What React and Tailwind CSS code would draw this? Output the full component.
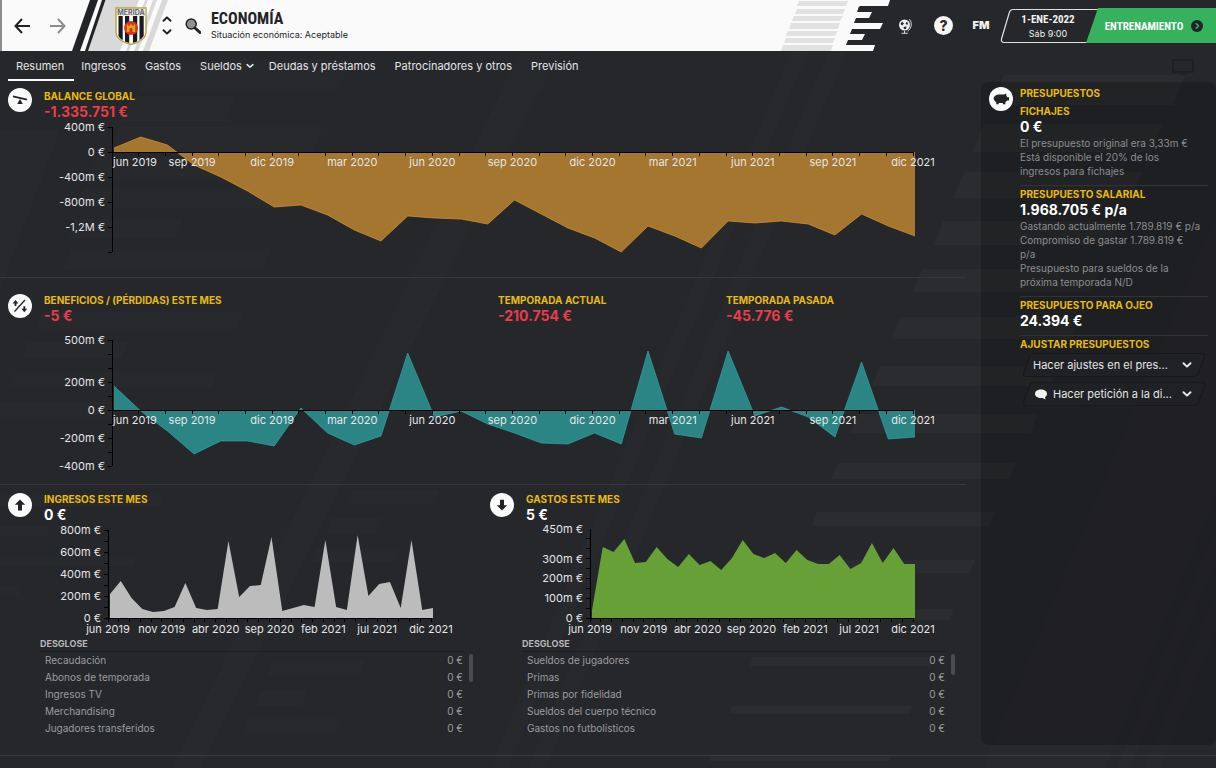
import React from "react";

const FONT = "font-['Inter','Liberation_Sans',sans-serif]";
const NARROW = "font-['Liberation_Sans_Narrow','Roboto_Condensed','Roboto',sans-serif]";
const TITLE = "text-[10px] font-bold leading-4 text-[#e8bb0c]";
const VALUE = "text-[14px] font-bold leading-4";

/* ---------- backdrop ---------- */

const LEFT_BARS = [
  [60, 31, 150, 350], [96, 25, 132, 236], [127, 27, 120, 323], [158, 22, 95, 305], [188, 20, 83, 305],
  [219, 19, 75, 183], [249, 20, 71, 271], [312, 17, 42, 243], [342, 16, 28, 128], [372, 15, 15, 218],
  [402, 15, -10, 120], [495, 11, -10, 165], [526, 10, -10, 50], [556, 10, -10, 137], [586, 10, -10, 22],
  [490, 14, 352, 440], [518, 16, 332, 382], [548, 14, 318, 400], [660, 16, 274, 366], [690, 16, 262, 308], [719, 16, 248, 342],
];
const RIGHT_BARS = [
  [75, 30, 1004, 1185], [124, 28, 984, 1163], [172, 26, 964, 1142], [221, 24, 943, 1121], [269, 23, 922, 1100],
  [317, 22, 900, 1079], [366, 20, 880, 1058], [414, 19, 858, 1038], [463, 16, 838, 1016], [512, 14, 817, 995],
  [560, 13, 797, 975], [609, 11, 775, 954], [657, 9, 753, 933], [706, 8, 732, 913], [755, 6, 711, 891],
];

const Bar = ([y, h, l, r]) => (
  <polygon key={`${y}-${l}`} points={`${l},${y} ${r},${y} ${r - h * 0.4},${y + h} ${l - h * 0.4},${y + h}`} />
);

function Backdrop() {
  return (
    <svg aria-hidden="true" className="absolute inset-0 h-full w-full" viewBox="0 0 1216 768" preserveAspectRatio="none">
      <g fill="#ffffff" fillOpacity="0.013">{LEFT_BARS.map(Bar)}</g>
      <g fill="#ffffff" fillOpacity="0.022">{RIGHT_BARS.map(Bar)}</g>
      <g fill="#ffffff" fillOpacity="0.01">
        <polygon points="791,52 808,52 508,768 490,768" />
        <polygon points="828,52 847,52 546,768 528,768" />
        <polygon points="520,52 560,52 200,768 172,768" />
        <polygon points="1216,215 1216,495 1105,768 983,768" />
        <polygon points="1216,527 1216,560 1130,768 1117,768" />
        <polygon points="1216,592 1216,630 1160,768 1144,768" />
        <polygon points="0,130 60,130 0,290" />
      </g>
    </svg>
  );
}

/* ---------- icons ---------- */

function Disc({ children }) {
  return (
    <svg aria-hidden="true" className="h-6 w-6 shrink-0" viewBox="0 0 24 24">
      <circle cx="12" cy="12" r="12" fill="#fafafa" />
      {children}
    </svg>
  );
}

const BalanceIcon = () => (
  <Disc>
    <path d="M5 8.3 19 11.6" stroke="#222326" strokeWidth="1.7" />
    <path d="M12 11 14.8 16H9.2Z" fill="#222326" />
  </Disc>
);
const ProfitIcon = () => (
  <Disc>
    <path d="M6.5 17.5 17 6" stroke="#222326" strokeWidth="1.3" />
    <path d="M7.5 6 10.4 9.4H8.4V12H6.6V9.4H4.6ZM16.3 18.2 13.4 14.8H15.4V12.2H17.2V14.8H19.2Z" fill="#222326" />
  </Disc>
);
const UpIcon = () => (
  <Disc><path d="M12 6.5 17.2 11.8H14V17.4H10V11.8H6.8Z" fill="#222326" /></Disc>
);
const DownIcon = () => (
  <Disc><path d="M12 17.5 17.2 12.2H14V6.8H10V12.2H6.8Z" fill="#222326" /></Disc>
);
const PigIcon = () => (
  <Disc>
    <path d="M4.6 11.4C5 8.6 7.6 7.4 11 7.4H15L17.2 6.6 17.4 8.8 18.4 10.2H20V13.4H18.3L16.4 15V17.3H13.9V16H9.7V17.3H7.2V15C5.8 14.2 4.9 13 4.6 11.4Z" fill="#222326" />
  </Disc>
);

const Chevron = ({ className }) => (
  <svg aria-hidden="true" className={className} viewBox="0 0 10 10" fill="none" stroke="currentColor" strokeWidth="2" strokeLinecap="round" strokeLinejoin="round">
    <path d="M1.5 3.2 5 6.6 8.5 3.2" />
  </svg>
);

function Crest() {
  return (
    <svg role="img" aria-label="Mérida" className="h-[38px] w-8" viewBox="0 0 32 38">
      <clipPath id="shield"><path d="M2 2H30V26Q29 33 16 36.5 3 33 2 26Z" /></clipPath>
      <path d="M1 1H31V26Q30 34 16 37.5 2 34 1 26Z" fill="#fafafa" stroke="#b9a545" strokeWidth="1.4" />
      <g clipPath="url(#shield)">
        {[3.5, 10, 18, 24.5].map((x) => <rect key={x} x={x} y="9" width="4.2" height="28" fill="#1b1c1f" />)}
        <rect x="2" y="2" width="28" height="7" fill="#e9e9ea" />
      </g>
      <text x="16" y="8" textAnchor="middle" fontSize="7" fontWeight="bold" fill="#66676b">MERIDA</text>
      <circle cx="16" cy="21" r="7" fill="#d9341f" />
      <path d="M11.8 25V17.5H13.2V19H14.6V17.5H17.4V19H18.8V17.5H20.2V25H17.6V22.4A1.6 1.6 0 0 0 14.4 22.4V25Z" fill="#e0a41f" />
    </svg>
  );
}

/* ---------- charts ---------- */

function AreaChart({ label, height, base, series, top, bottom, step, yLabels, xLabels, xEvery, xOffset, clampFirst, fill, line }) {
  const last = series.length - 1;
  const outline = series.map((v, i) => `${i},${base - v}`).join(" ");
  const area = `0,${base} ${outline} ${last},${base}`;
  const yTicks = [];
  for (let v = -bottom; v <= top; v += step) yTicks.push(v);
  return (
    <svg role="img" aria-label={label} className="block w-full overflow-visible text-[11px]" height={height}>
      <svg x="2" width="100%" height={height} viewBox={`0 0 ${last} ${height}`} preserveAspectRatio="none">
        <polygon points={area} fill={fill} />
        {line && <polyline points={outline} fill="none" stroke={line} strokeOpacity="0.7" strokeWidth="1" vectorEffect="non-scaling-stroke" />}
      </svg>
      <g stroke="#000" strokeWidth="1" shapeRendering="crispEdges">
        <line x1="0" x2="100%" y1={base} y2={base} />
        <line x1="0" x2="0" y1={base - top} y2={base + bottom} />
        {yTicks.map((v) => <line key={v} x1="-4" x2="0" y1={base - v} y2={base - v} />)}
        {series.map((_, i) => <line key={i} x1={`${(i / last) * 100}%`} x2={`${(i / last) * 100}%`} y1={base} y2={base + 4} />)}
      </g>
      <g fill="#e4e5e6">
        {yLabels.map(([v, t]) => <text key={t} x="-7" y={base - v + 4} textAnchor="end">{t}</text>)}
        {xLabels.map((t, i) => {
          const first = clampFirst && i === 0;
          return (
            <text key={t} x={first ? "1" : `${Math.min(100, ((i * xEvery) / last) * 100)}%`} y={base + xOffset} textAnchor={first ? "start" : "middle"}>{t}</text>
          );
        })}
      </g>
    </svg>
  );
}

const BALANCE = [4, 15, 7, -13, -25, -39, -55, -53, -63, -78, -89, -64, -66, -67, -72, -48, -62, -76, -86, -100, -74, -84, -96, -69, -71, -69, -72, -83, -62, -74, -84];
const PROFIT = [24, -1, -21, -44, -31, -31, -36, 2, -23, -35, -26, 57, -7, -1, -14, -23, -33, -34, -23, -34, 59, -24, -28, 59, -6, 3, -7, -27, 48, -29, -27];
const INCOME = [24, 37, 20, 9, 6, 7, 11, 35, 10, 8, 9, 77, 21, 32, 33, 81, 7, 10, 13, 11, 78, 11, 8, 83, 22, 34, 36, 10, 78, 8, 10];
const SPENDING = [8, 71, 66, 79, 55, 56, 71, 59, 51, 64, 53, 57, 48, 60, 78, 64, 60, 65, 55, 68, 58, 54, 54, 63, 49, 55, 75, 55, 70, 54, 54];

const QUARTERS = ["jun 2019", "sep 2019", "dic 2019", "mar 2020", "jun 2020", "sep 2020", "dic 2020", "mar 2021", "jun 2021", "sep 2021", "dic 2021"];
const MONTHS = ["jun 2019", "nov 2019", "abr 2020", "sep 2020", "feb 2021", "jul 2021", "dic 2021"];

/* ---------- building blocks ---------- */

function Stat({ title, value, tone, className = "" }) {
  return (
    <div className={className}>
      <h2 className={TITLE}>{title}</h2>
      <p className={`${VALUE} ${tone}`}>{value}</p>
    </div>
  );
}

const RED = "text-[#e93d49]";

function Breakdown({ rows, thumb }) {
  return (
    <div className="flex gap-[5px] pl-10 pr-[9px]">
      <table className="flex-1 text-[10px] text-[#9b9c9e]">
        <thead>
          <tr className="border-b border-[#1d1e21]">
            <th colSpan="2" className="p-0 text-left text-[9px] font-bold leading-[15px] text-[#b5b6b8]">DESGLOSE</th>
          </tr>
        </thead>
        <tbody>
          {rows.map((r) => (
            <tr key={r}>
              <td className="p-0 pl-[5px] leading-[17px]">{r}</td>
              <td className="p-0 pr-px text-right leading-[17px]">0 €</td>
            </tr>
          ))}
        </tbody>
      </table>
      <div className={`mt-[18px] w-1 rounded-sm bg-[#4b4c50] ${thumb}`} />
    </div>
  );
}

function MonthPanel({ icon, title, value, thumb, rows, chart }) {
  return (
    <section>
      <div className="flex items-center gap-3 pl-2 pt-[6px]">
        <div className="pb-1">{icon}</div>
        <Stat title={title} value={value} tone="text-white" />
      </div>
      <div className="ml-[108px] mr-[51px]">{chart}</div>
      <Breakdown rows={rows} thumb={thumb} />
    </section>
  );
}

function Budget({ title, value, notes = [] }) {
  return (
    <div className="border-b border-[#323337] pb-[7px]">
      <h3 className={TITLE}>{title}</h3>
      <p className="text-[14px] font-bold leading-[15px] text-white">{value}</p>
      {notes.length > 0 && (
        <div className="whitespace-pre-line pt-[2px] text-[10px] leading-[14px] text-[#8c8d90]">
          {notes.map((n) => <p key={n}>{n}</p>)}
        </div>
      )}
    </div>
  );
}

function ActionSelect({ label, text, icon }) {
  return (
    <div className="relative flex h-6 items-center gap-[6px] pl-[13px] pr-4 text-[#e4e5e6]">
      <div className="absolute inset-y-0 left-[6px] right-[6px] -skew-x-[20deg] rounded-[4px] border border-[#17181a] bg-[#202124]" />
      {icon}
      <select aria-label={label} className="relative min-w-0 flex-1 appearance-none bg-transparent text-[11px] leading-4 outline-none">
        <option>{text}</option>
      </select>
      <Chevron className="relative h-[10px] w-[10px]" />
    </div>
  );
}

/* ---------- header ---------- */

function Header() {
  return (
    <header className="relative flex h-[51px]">
      <div className="relative flex min-w-0 flex-1 items-center border-l-2 border-[#8b8c8f] bg-[#fafafa] text-[#222326]">
        <svg aria-hidden="true" className="absolute left-0 top-0 h-[51px] w-[180px]" viewBox="2 0 180 51">
          <polygon points="106,0 172,0 152,51 87,51" fill="#d9d9da" />
          <polygon points="90,0 98,0 80,51 72,51" fill="#222326" />
          <polygon points="102,0 105.500,0 88,51 85,51" fill="#222326" />
          <g fill="#fafafa">
            <polygon points="139,0 145,0 126,51 120,51" />
            <polygon points="148,0 153,0 134,51 129,51" />
            <polygon points="157,0 162,0 143,51 138,51" />
            <polygon points="168,0 174,0 156,51 149,51" />
          </g>
        </svg>
        <button aria-label="Atrás" className="relative ml-3">
          <svg className="h-4 w-4" viewBox="0 0 16 16" fill="none" stroke="#222326" strokeWidth="2"><path d="M8 1 1.500 8 8 15M1.500 8H16" /></svg>
        </button>
        <button aria-label="Adelante" className="relative ml-5">
          <svg className="h-4 w-4" viewBox="0 0 16 16" fill="none" stroke="#8c8d90" strokeWidth="2"><path d="M8 1 14.500 8 8 15M14.500 8H0" /></svg>
        </button>
        <div className="relative ml-[49px]"><Crest /></div>
        <div className="relative ml-[15px] flex flex-col gap-[3px]">
          <button aria-label="Anterior"><Chevron className="h-[10px] w-[10px] rotate-180" /></button>
          <button aria-label="Siguiente"><Chevron className="h-[10px] w-[10px]" /></button>
        </div>
        <button aria-label="Buscar" className="relative ml-[13px]">
          <svg className="h-4 w-4" viewBox="0 0 16 16"><circle cx="6.200" cy="6" r="5" fill="#8f9092" stroke="#222326" strokeWidth="1.500" /><path d="M10 10 15 14.500" stroke="#222326" strokeWidth="3" strokeLinecap="round" /></svg>
        </button>
        <div className="relative ml-[10px] pb-[2px]">
          <h1 className={`text-[16px] font-bold leading-5 ${NARROW}`}>ECONOMÍA</h1>
          <p className="text-[9px] leading-3">Situación económica: Aceptable</p>
        </div>
      </div>
      <svg aria-hidden="true" className="h-[51px] w-[120px] shrink-0" viewBox="770 0 120 51">
        <polygon points="770,0 862,0 846,51 770,51" fill="#fafafa" />
        <g fill="#e1e1e1">
          <polygon points="799,1 848,1 846,6 797,6" /><polygon points="797,9 845,9 843,14 795,14" />
          <polygon points="794,16 843,16 840,21 792,21" /><polygon points="791,23 840,23 838,29 789,29" />
          <polygon points="788,31 838,31 835,36 786,36" /><polygon points="786,38 835,38 833,43 784,43" />
          <polygon points="783,45 833,45 831,51 781,51" />
        </g>
        <g fill="#fafafa">
          <polygon points="855,0 890,0 888,6 855,6" /><polygon points="855,12 872,12 869,18 852,18" />
          <polygon points="850,23 883,23 880,29 848,29" /><polygon points="848,34 865,34 862,40 845,40" />
          <polygon points="845,45 875,45 873,51 840,51" />
        </g>
        <g fill="#26272b">
          <polygon points="859,6.500 880,6.500 878,12 857,12" /><polygon points="856,18 875,18 873,23 854,23" />
          <polygon points="852,29 871,29 869,34 850,34" /><polygon points="848,40 868,40 866,45 846,45" />
        </g>
      </svg>
      <div className="flex shrink-0 items-center">
        <button aria-label="Mundo" className="ml-[7px]">
          <svg className="h-4 w-4" viewBox="0 0 16 16">
            <circle cx="7.500" cy="7" r="5.500" fill="#eceded" />
            <path d="M5 3.500 7 5.500 5 7.500 3.500 6ZM9 4 11 4.800 10.500 7 8.800 6ZM6.500 9 9.500 8.500 9 11H7Z" fill="#26272b" />
            <path d="M12.500 1.200A8 8 0 0 1 10.500 13.200M7.500 13V15.200M4.500 15.300H10.800" stroke="#d8d9da" fill="none" />
          </svg>
        </button>
        <button aria-label="Ayuda" className="ml-[21px] flex h-[19px] w-[19px] items-center justify-center rounded-full bg-[#f6f7f2] text-[14px] font-extrabold leading-none text-[#26272b]">?</button>
        <button aria-label="Football Manager" className="ml-[19px] w-[18px] text-[11px] font-black leading-none text-[#f1f2ee]">FM</button>
        <div className="relative ml-[10px] flex h-9 items-stretch">
          <svg aria-hidden="true" className="absolute left-0 top-0 h-9 w-[216px]" viewBox="0 0 216 36">
            <path d="M98 1.500H13Q10.500 1.500 9.500 4L1.500 31Q1 34.500 4 34.500H90" fill="none" stroke="#dfe0da" strokeWidth="1.200" />
            <polygon points="98,0 216,0 216,35 86,35" fill="#36b25f" />
          </svg>
          <div className="relative flex w-[96px] flex-col items-center pt-1 text-[#f1f2ee]">
            <span className={`text-[11px] font-bold leading-4 ${NARROW}`}>1-ENE-2022</span>
            <span className="text-[9px] leading-[11px]">Sáb 9:00</span>
          </div>
          <button className={`relative flex w-[120px] items-center justify-center gap-2 pr-1 text-[11px] font-bold text-white ${NARROW}`}>
            <span className="pt-[3px] leading-4">ENTRENAMIENTO</span>
            <svg aria-hidden="true" className="h-3 w-3" viewBox="0 0 12 12"><circle cx="6" cy="6" r="6" fill="#222326" /><path d="M4.800 3.300 7.500 6 4.800 8.700" stroke="#36b25f" strokeWidth="1.500" fill="none" /></svg>
          </button>
        </div>
      </div>
    </header>
  );
}

const TABS = ["Ingresos", "Gastos", "Sueldos", "Deudas y préstamos", "Patrocinadores y otros", "Previsión"];

function Tabs() {
  return (
    <nav className="relative flex h-[31px] items-start gap-[19px] pl-2 text-[11px] leading-[30px] text-[#e4e5e6]">
      <a href="#resumen" aria-current="page" className="-mr-3 h-[30px] border-b-2 border-[#fafafa] pl-2 pr-[10px]">Resumen</a>
      {TABS.map((t) =>
        t === "Sueldos" ? (
          <button key={t} aria-haspopup="menu" className="-mr-1 flex items-center gap-1">{t}<Chevron className="h-2 w-2" /></button>
        ) : (
          <a key={t} href={`#${t}`}>{t}</a>
        )
      )}
      <svg aria-hidden="true" className="ml-auto mr-[22px] mt-2 h-4 w-[22px]" viewBox="0 0 22 16"><path d="M1 1H21V13H1ZM8 15.500H14" fill="none" stroke="#1e1f22" strokeWidth="1.500" /></svg>
    </nav>
  );
}

/* ---------- page ---------- */

export default function App() {
  return (
    <div className={`relative min-h-screen overflow-hidden bg-[#26272b] ${FONT}`}>
      <Backdrop />
      <Header />
      <Tabs />
      <div className="relative flex gap-[15px]">
        <main className="min-w-0 flex-1">
          <section className="border-b border-[#38353c] pb-[15px]">
            <div className="flex items-center gap-3 pl-2 pt-[6px]">
              <div className="pb-[10px]"><BalanceIcon /></div>
              <Stat className="-mt-[2px]" title="BALANCE GLOBAL" value="-1.335.751 €" tone={RED} />
            </div>
            <div className="ml-[112px] mr-[53px]">
              <AreaChart label="Balance global" height={140} base={30} series={BALANCE} top={25} bottom={100} step={25}
                yLabels={[[25, "400m €"], [0, "0 €"], [-25, "-400m €"], [-50, "-800m €"], [-75, "-1,2M €"]]}
                xLabels={QUARTERS} xEvery={3} xOffset={14} clampFirst fill="#a4762f" line="#d9952f" />
            </div>
          </section>

          <section className="border-b border-[#36373b] pb-[10px]">
            <div className="flex gap-3 pl-2 pt-[14px]">
              <div className="pt-[2px]"><ProfitIcon /></div>
              <div className="flex flex-1">
                <Stat className="w-[454px]" title="BENEFICIOS / (PÉRDIDAS) ESTE MES" value="-5 €" tone={RED} />
                <Stat className="w-[228px]" title="TEMPORADA ACTUAL" value="-210.754 €" tone={RED} />
                <Stat title="TEMPORADA PASADA" value="-45.776 €" tone={RED} />
              </div>
            </div>
            <div className="ml-[112px] mr-[53px]">
              <AreaChart label="Beneficios y pérdidas" height={150} base={86} series={PROFIT} top={70} bottom={56} step={14}
                yLabels={[[70, "500m €"], [28, "200m €"], [0, "0 €"], [-28, "-200m €"], [-56, "-400m €"]]}
                xLabels={QUARTERS} xEvery={3} xOffset={14} clampFirst fill="#2c8585" line="#2fa5a6" />
            </div>
          </section>

          <div className="grid grid-cols-2 pr-[2px]">
            <MonthPanel icon={<UpIcon />} title="INGRESOS ESTE MES" value="0 €" thumb="h-7"
              rows={["Recaudación", "Abonos de temporada", "Ingresos TV", "Merchandising", "Jugadores transferidos"]}
              chart={<AreaChart label="Ingresos" height={113} base={95} series={INCOME} top={88} bottom={0} step={11}
                yLabels={[[88, "800m €"], [66, "600m €"], [44, "400m €"], [22, "200m €"], [0, "0 €"]]}
                xLabels={MONTHS} xEvery={5} xOffset={15} fill="#bcbcbc" />} />
            <MonthPanel icon={<DownIcon />} title="GASTOS ESTE MES" value="5 €" thumb="h-[21px]"
              rows={["Sueldos de jugadores", "Primas", "Primas por fidelidad", "Sueldos del cuerpo técnico", "Gastos no futbolísticos"]}
              chart={<AreaChart label="Gastos" height={113} base={95} series={SPENDING} top={89} bottom={0} step={10}
                yLabels={[[89, "450m €"], [59, "300m €"], [40, "200m €"], [20, "100m €"], [0, "0 €"]]}
                xLabels={MONTHS} xEvery={5} xOffset={15} fill="#68a038" />} />
          </div>
        </main>

        <aside className="mb-[10px] flex min-h-[663px] w-[235px] shrink-0 items-start gap-[7px] rounded-lg bg-black/20 pl-2 pr-2 pt-[3px]">
          <div className="pt-[2px]"><PigIcon /></div>
          <div className="min-w-0 flex-1">
            <h2 className={`${TITLE} pb-[2px]`}>PRESUPUESTOS</h2>
            <Budget title="FICHAJES" value="0 €" notes={["El presupuesto original era 3,33m €", "Está disponible el 20% de los\ningresos para fichajes"]} />
            <Budget title="PRESUPUESTO SALARIAL" value="1.968.705 € p/a"
              notes={["Gastando actualmente 1.789.819 € p/a", "Compromiso de gastar 1.789.819 €\np/a", "Presupuesto para sueldos de la\npróxima temporada N/D"]} />
            <Budget title="PRESUPUESTO PARA OJEO" value="24.394 €" />
            <h3 className={TITLE}>AJUSTAR PRESUPUESTOS</h3>
            <div className="flex flex-col gap-[5px] pt-px">
              <ActionSelect label="Ajustar presupuestos" text="Hacer ajustes en el pres..." />
              <ActionSelect label="Petición a la directiva" text="Hacer petición a la di..."
                icon={<svg aria-hidden="true" className="relative ml-[2px] h-[11px] w-3 shrink-0" viewBox="0 0 12 11"><path d="M6 0.500C9.500 0.500 12 2.300 12 4.800 12 6.500 11.200 7.500 10 8.200L10.500 10.500 7.500 9C3 9.500 0 7.500 0 4.800 0 2.300 2.500 0.500 6 0.500Z" fill="#f1f2ee" /></svg>} />
            </div>
          </div>
        </aside>
      </div>
      <div className="relative border-t border-[#3a3b3f]" />
    </div>
  );
}
